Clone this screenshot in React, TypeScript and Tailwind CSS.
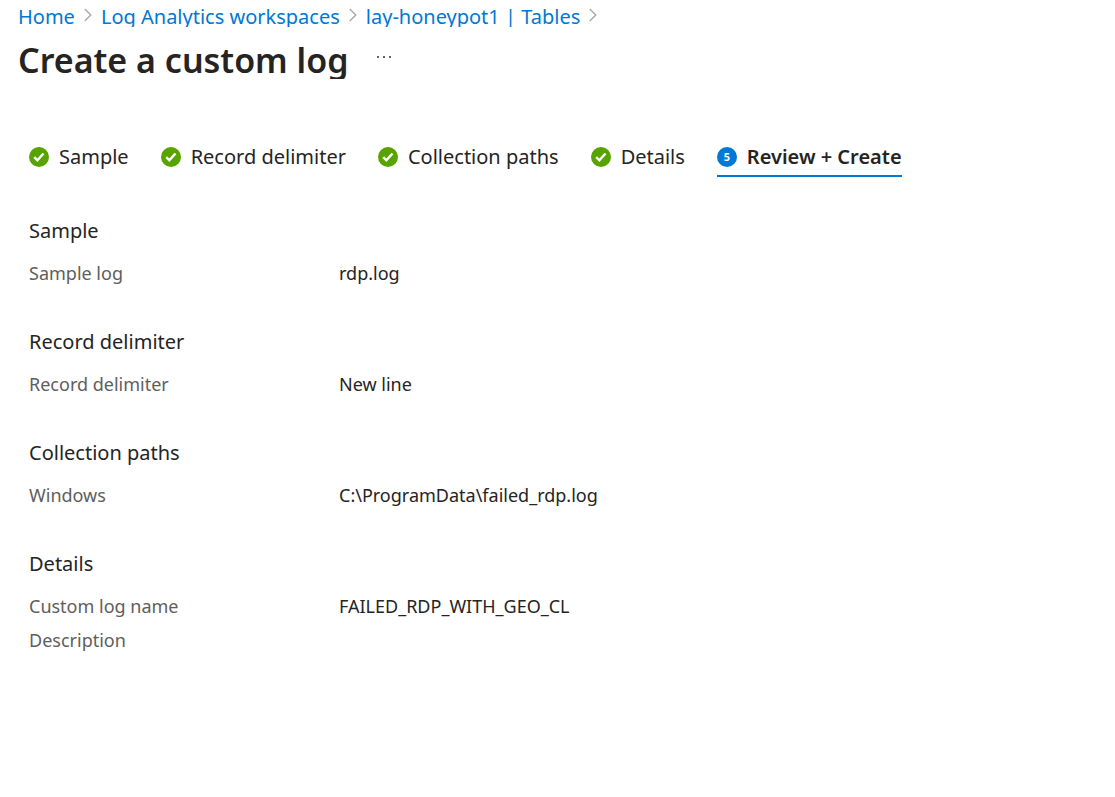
import React from "react";

const crumbs = ["Home", "Log Analytics workspaces", "lay-honeypot1 | Tables"];

const doneSteps = ["Sample", "Record delimiter", "Collection paths", "Details"];

const sections = [
  { title: "Sample", rows: [["Sample log", "rdp.log"]] },
  { title: "Record delimiter", rows: [["Record delimiter", "New line"]] },
  { title: "Collection paths", rows: [["Windows", "C:\\ProgramData\\failed_rdp.log"]] },
  {
    title: "Details",
    rows: [
      ["Custom log name", "FAILED_RDP_WITH_GEO_CL"],
      ["Description", ""],
    ],
  },
];

function Chevron() {
  return (
    <svg className="mb-1 h-4 w-2 shrink-0" viewBox="0 0 8 16" fill="none" stroke="#a8a6a4" strokeWidth="1.3" aria-hidden="true">
      <path d="M0.8 2 L6.8 8 L0.8 14" />
    </svg>
  );
}

function Check() {
  return (
    <svg className="size-5 shrink-0" viewBox="0 0 20 20" aria-hidden="true">
      <circle cx="10" cy="10" r="10" fill="#57a300" />
      <path d="M5.2 10.1 L8.4 13.3 L14.5 6.5" fill="none" stroke="#fff" strokeWidth="2.5" />
    </svg>
  );
}

export default function App() {
  return (
    <div className="bg-white font-['Noto_Sans',sans-serif] text-[#252423]">
      <header className="px-[18px]">
        <nav aria-label="Breadcrumb" className="h-[27px] overflow-hidden pt-[5px]">
          <ol className="flex h-6 items-center gap-[9px] text-xl leading-6 text-[#0078d4]">
            {crumbs.map((c) => (
              <li key={c} className="flex items-center gap-[9px] whitespace-nowrap">
                <a href="#">{c}</a>
                <Chevron />
              </li>
            ))}
          </ol>
        </nav>
        <div className="flex items-start gap-7">
          <h1 className="mt-3 h-10 overflow-hidden text-[34px] leading-[42px] font-semibold whitespace-nowrap">Create a custom log</h1>
          <button type="button" aria-label="More actions" className="mt-[22px] flex h-4 items-center">
            <svg className="h-1 w-4" viewBox="0 0 16 4" fill="#323130" aria-hidden="true">
              <circle cx="2" cy="2" r="1" />
              <circle cx="8" cy="2" r="1" />
              <circle cx="14" cy="2" r="1" />
            </svg>
          </button>
        </div>
      </header>

      <main className="px-[29px] pt-15">
        <div role="tablist" className="flex gap-8 text-xl leading-7">
          {doneSteps.map((s) => (
            <button key={s} type="button" role="tab" aria-selected="false" className="flex h-[38px] items-center gap-2.5 border-b-2 border-transparent whitespace-nowrap">
              <Check />
              {s}
            </button>
          ))}
          <button type="button" role="tab" aria-selected="true" className="flex h-[38px] items-center gap-2.5 border-b-2 border-[#0078d4] font-semibold whitespace-nowrap">
            <span className="flex size-5 items-center justify-center rounded-full bg-[#0078d4] text-[11px] leading-5 font-bold text-white">5</span>
            Review + Create
          </button>
        </div>

        <div className="flex flex-col gap-[38px] pt-10">
          {sections.map((s) => (
            <section key={s.title}>
              <h2 className="text-xl leading-7">{s.title}</h2>
              <dl className="pt-[11px]">
                {s.rows.map(([k, v]) => (
                  <div key={k} className="flex py-[3px] text-lg leading-7">
                    <dt className="w-[310px] shrink-0 text-[#605e5c]">{k}</dt>
                    <dd>{v}</dd>
                  </div>
                ))}
              </dl>
            </section>
          ))}
        </div>
      </main>
    </div>
  );
}
